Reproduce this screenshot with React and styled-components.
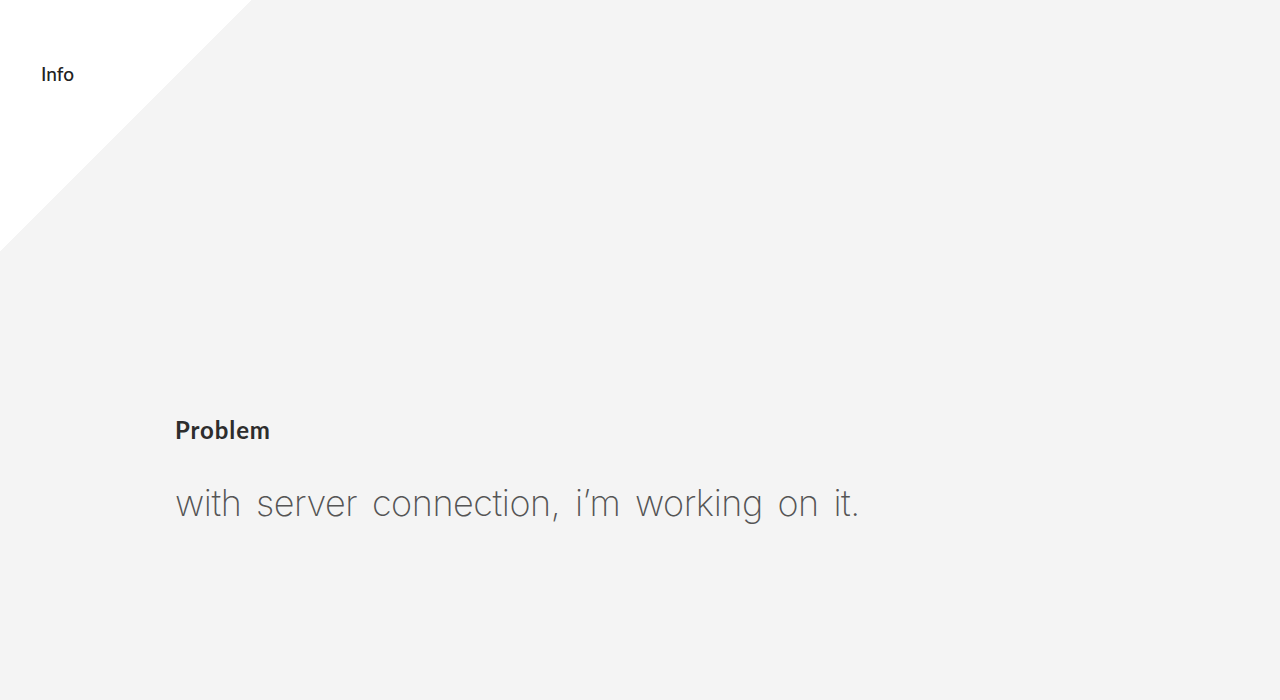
import React from "react";
import styled, { createGlobalStyle } from "styled-components";

const GlobalStyle = createGlobalStyle`
  * { box-sizing: border-box; }
  html, body { margin: 0; padding: 0; }
  body {
    background: #f4f4f4;
    font-family: Lato, "Open Sans", sans-serif;
  }
`;

const Page = styled.div`
  min-height: 100vh;
  display: flex;
  flex-direction: column;
  background: #f4f4f4;
`;

// white corner triangle that holds the nav link
const Corner = styled.nav`
  width: 252px;
  height: 252px;
  padding: 62px 0 0 41px;
  background: linear-gradient(135deg, #ffffff 50%, transparent 50%);
`;

const NavLink = styled.a`
  font-size: 19px;
  font-weight: 500;
  color: #222;
  text-decoration: none;
  line-height: 24px;
`;

const Main = styled.main`
  display: flex;
  flex-direction: column;
  padding: 163px 0 0 175px;
`;

const Title = styled.h1`
  margin: 0;
  font-size: 24px;
  font-weight: 700;
  color: #2d2d2d;
  line-height: 30px;
  letter-spacing: 0.9px;
`;

const Message = styled.p`
  margin: 33px 0 0;
  font-family: Inter, Lato, sans-serif;
  font-size: 36px;
  font-weight: 150;
  color: #555;
  line-height: 50px;
  letter-spacing: -0.45px;
  word-spacing: 5px;
`;

const App = () => {
  return (
    <>
      <GlobalStyle />
      <Page>
        <Corner>
          <NavLink href="#">Info</NavLink>
        </Corner>
        <Main>
          <Title>Problem</Title>
          <Message>with server connection, i’m working on it.</Message>
        </Main>
      </Page>
    </>
  );
};

export default App;
